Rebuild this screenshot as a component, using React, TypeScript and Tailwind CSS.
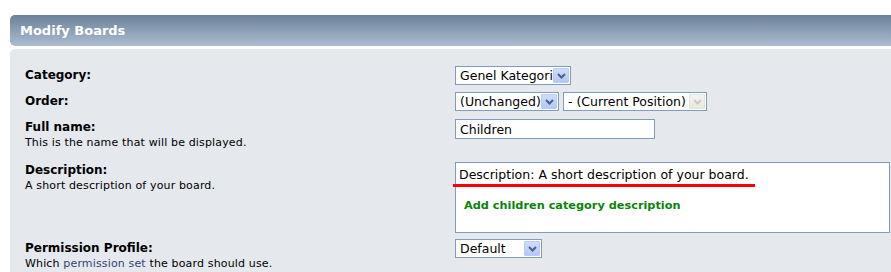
import React from "react";

const font = { fontFamily: '"DejaVu Sans", Verdana, sans-serif' };

function Chevron({ disabled }: { disabled?: boolean }) {
  return (
    <svg width="9" height="6" viewBox="0 0 9 6" className="block">
      <polyline
        points="1,1 4.5,4.5 8,1"
        fill="none"
        stroke={disabled ? "#c9cbc6" : "#4d6185"}
        strokeWidth="2"
      />
    </svg>
  );
}

function Select({ text, width, disabled }: { text: string; width: string; disabled?: boolean }) {
  return (
    <div
      className={`flex h-[19px] items-center justify-between border border-[#7f9db9] bg-white pl-[4px] pr-[1px] ${width}`}
    >
      <span className="text-[12.5px] leading-[15px] text-black whitespace-nowrap">{text}</span>
      <div
        className={
          disabled
            ? "flex h-[15px] w-[16px] shrink-0 items-center justify-center rounded-[1px] border border-[#e2e3de] bg-gradient-to-b from-[#f4f4f0] to-[#e9e9e3]"
            : "flex h-[15px] w-[16px] shrink-0 items-center justify-center rounded-[1px] border border-[#b9cbf5] bg-gradient-to-b from-[#cfdcfd] to-[#b4c8f6]"
        }
      >
        <Chevron disabled={disabled} />
      </div>
    </div>
  );
}

export default function App() {
  return (
    <div className="w-[891px] h-[272px] overflow-hidden bg-white" style={font}>
      <div className="pl-[10px] pt-[15px]">
        <div className="flex h-[31px] items-center rounded-l-[5px] bg-gradient-to-b from-[#6c8199] to-[#abbdd1] pl-[10px]">
          <span className="text-[13px] font-bold text-white">Modify Boards</span>
        </div>
        <div className="mt-[3px] rounded-tl-[5px] bg-[#e5e9ee] pl-[15px] pt-[17px] pb-[20px]">
          {/* Category */}
          <div className="flex items-start">
            <div className="w-[430px] pt-[1px]">
              <div className="text-[12px] font-bold leading-[16px] text-black">Category:</div>
            </div>
            <Select text="Genel Kategori" width="w-[116px]" />
          </div>
          {/* Order */}
          <div className="mt-[7px] flex items-start">
            <div className="w-[430px] pt-[1px]">
              <div className="text-[12px] font-bold leading-[16px] text-black">Order:</div>
            </div>
            <div className="flex gap-[4px]">
              <Select text="(Unchanged)" width="w-[104px]" />
              <Select text="- (Current Position)" width="w-[144px]" disabled />
            </div>
          </div>
          {/* Full name */}
          <div className="mt-[8px] flex items-start">
            <div className="w-[430px]">
              <div className="text-[12px] font-bold leading-[16px] text-black">Full name:</div>
              <div className="text-[11px] leading-[15px] tracking-[0.15px] text-black">
                This is the name that will be displayed.
              </div>
            </div>
            <div className="flex h-[20px] w-[200px] items-center border border-[#7f9db9] bg-white pl-[4px]">
              <span className="text-[12.5px] leading-[15px] text-black">Children</span>
            </div>
          </div>
          {/* Description */}
          <div className="mt-[12px] flex items-start">
            <div className="w-[430px]">
              <div className="text-[12px] font-bold leading-[16px] text-black">Description:</div>
              <div className="text-[11px] leading-[15px] tracking-[0.15px] text-black">
                A short description of your board.
              </div>
            </div>
            <div className="relative h-[71px] w-[435px] border border-[#7f9db9] bg-white pl-[3px] pt-[4px]">
              <div className="text-[12.5px] leading-[16px] text-black whitespace-nowrap">
                Description: A short description of your board.
              </div>
              <div
                className="mt-[16px] pl-[5px] text-[11.3px] font-bold leading-[14px] text-[#0a840a]"
                style={{ fontFamily: '"DejaVu Sans", "Comic Sans MS", sans-serif' }}
              >
                Add children category description
              </div>
              <div className="absolute left-[-3px] top-[21px] h-[3px] w-[302px] bg-[#ff0000]" />
            </div>
          </div>
          {/* Permission Profile */}
          <div className="mt-[6px] flex items-start">
            <div className="w-[430px] pt-[1px]">
              <div className="text-[12px] font-bold leading-[16px] text-black">Permission Profile:</div>
              <div className="text-[11px] leading-[15px] tracking-[0.15px] text-black">
                Which <span className="text-[#334466]">permission set</span> the board should use.
              </div>
            </div>
            <Select text="Default" width="w-[87px]" />
          </div>
        </div>
      </div>
    </div>
  );
}
